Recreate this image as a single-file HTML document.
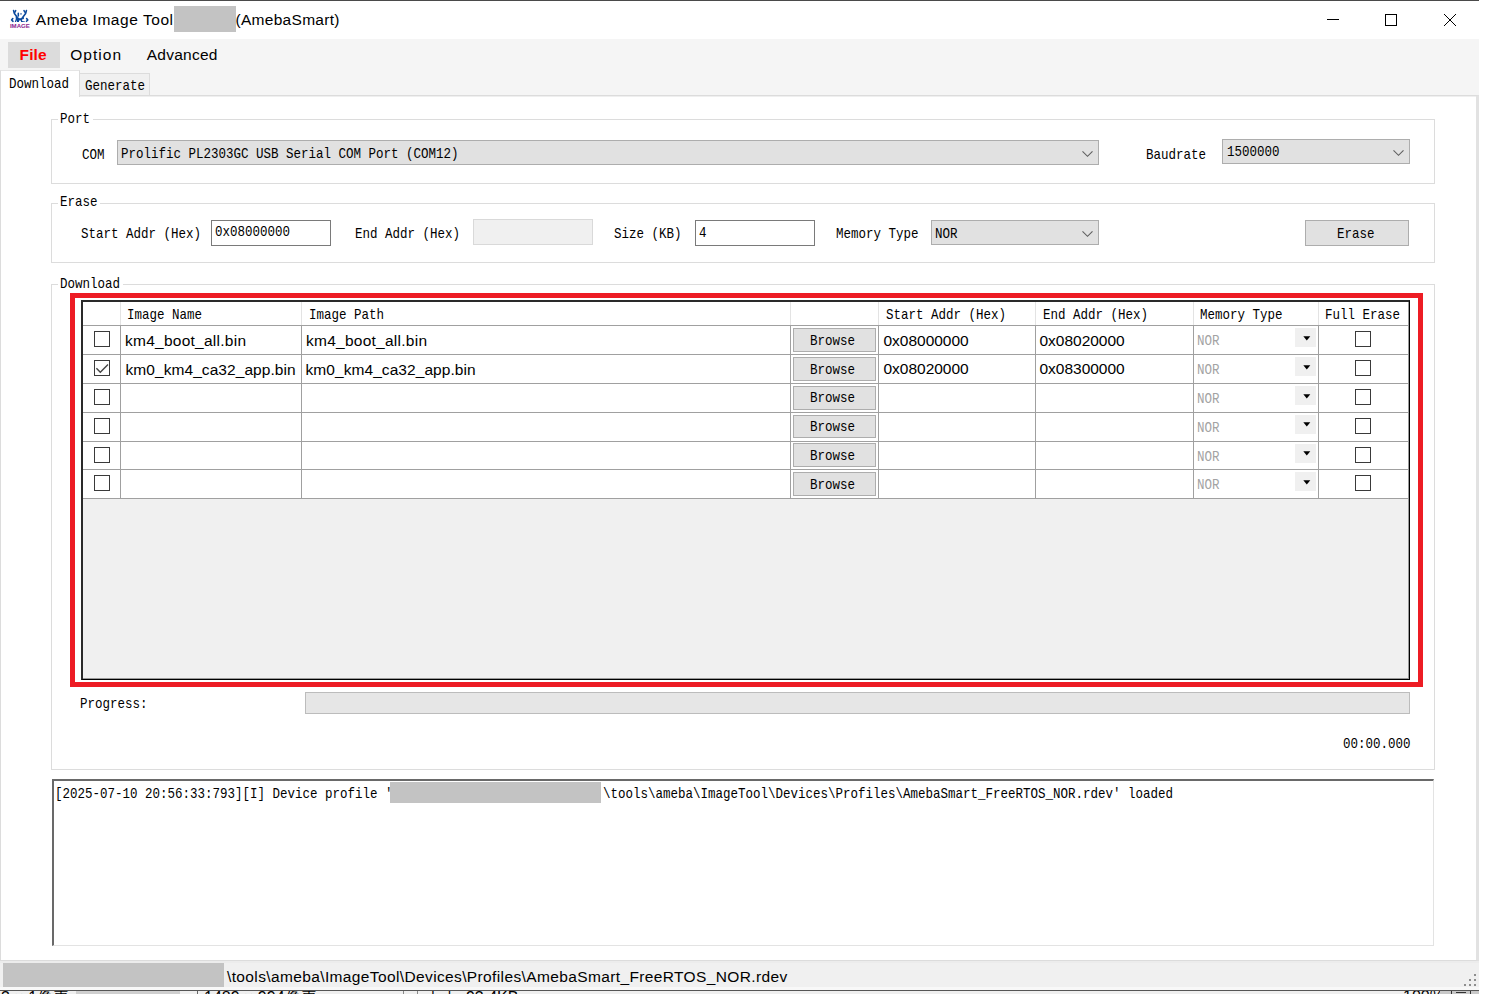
<!DOCTYPE html>
<html lang="en"><head><meta charset="utf-8"><title>Ameba Image Tool (AmebaSmart)</title>
<style>
*{box-sizing:border-box;margin:0;padding:0}
html,body{width:1489px;height:994px;overflow:hidden;background:#fff}
body{position:relative;font-family:"Liberation Sans",sans-serif;color:#000}
.a{position:absolute}
.m{position:absolute;font-family:"Liberation Mono",monospace;font-size:15px;line-height:16px;height:16px;white-space:pre;transform-origin:0 0;transform:scaleX(.8333);color:#000}
.s{position:absolute;font-family:"Liberation Sans",sans-serif;white-space:pre;color:#000}
.gb{position:absolute;border:1px solid #dcdcdc;background:#fff}
.gl{position:absolute;background:#fff;height:16px}
.sel{position:absolute;background:#e1e1e1;border:1px solid #adadad}
.inp{position:absolute;background:#fff;border:1px solid #7a7a7a}
.btn{position:absolute;background:#e1e1e1;border:1px solid #adadad}
.cb{position:absolute;width:16px;height:16px;border:1px solid #3a3a3a;background:#fff}
.hl{position:absolute;height:1px;background:#a0a0a0}
.vl{position:absolute;width:1px;background:#a0a0a0}
</style></head>
<body>
<div class="a" style="left:0px;top:0px;width:1479px;height:1px;background:#4a4a4a"></div>
<svg class="a" style="left:6px;top:6px" width="28" height="26" viewBox="0 0 28 26">
<g fill="none" stroke="#0b4a9e" stroke-width="1.6" stroke-linecap="round" stroke-linejoin="round">
<path d="M7.6 4.6L8.4 7.6L11.2 11.2"/><path d="M9.7 4.6L8.6 6.6"/>
<path d="M20.4 4.6L19.6 7.6L16.8 11.2"/><path d="M18 4.6L19.3 6.6"/>
<path d="M12.3 7.4V10"/>
<path d="M6.8 12.5L5.6 14L7 15.3"/><path d="M20.6 12.5L21.8 14L20.5 15.3"/>
</g>
<path d="M9.6 10.4L12.4 11.6L14 12.6L17.6 10.6L18 13L16 13.6L16.2 15L19 15.4V16H15V14.4L13 14.6V16H11V14L10 16H8.8L9.8 13Z" fill="#0b4a9e"/>
<circle cx="15" cy="7.9" r="0.8" fill="#3a6ab0"/>
<text x="3.9" y="21.9" font-family="Liberation Sans, sans-serif" font-weight="bold" font-size="5.6" fill="#8b1f8f" textLength="20" lengthAdjust="spacingAndGlyphs">IMAGE</text>
</svg>
<span class="s" style="left:35.8px;top:10px;font-size:15.5px;line-height:20px;letter-spacing:0.552px;">Ameba Image Tool</span>
<div class="a" style="left:174px;top:6px;width:62px;height:26px;background:#c3c3c3"></div>
<span class="s" style="left:235.5px;top:10px;font-size:15.5px;line-height:20px;letter-spacing:0.289px;">(AmebaSmart)</span>
<svg class="a" style="left:1320px;top:8px" width="150" height="24" viewBox="0 0 150 24" fill="none" stroke="#000" stroke-width="1"><path d="M7 11.5H19"/><rect x="65.5" y="6.5" width="11" height="11"/><path d="M124 6L136 18M136 6L124 18"/></svg>
<div class="a" style="left:0px;top:39px;width:1479px;height:951px;background:#f5f5f5"></div>
<div class="a" style="left:8px;top:42px;width:52px;height:25.5px;background:#dcdcdc"></div>
<span class="s" style="left:19.6px;top:45px;font-size:15.5px;line-height:20px;letter-spacing:0.069px;font-weight:bold;color:#f00">File</span>
<span class="s" style="left:70.3px;top:45px;font-size:15.5px;line-height:20px;letter-spacing:1.02px;">Option</span>
<span class="s" style="left:146.8px;top:45px;font-size:15.5px;line-height:20px;letter-spacing:0.231px;">Advanced</span>
<div class="a" style="left:0px;top:95px;width:1479px;height:866px;background:#fff;border:1px solid #dcdcdc;border-right:3px solid #e2e2e2;box-shadow:inset 0 1px 0 #efefef"></div>
<div class="a" style="left:79px;top:73px;width:71px;height:23px;background:#f0f0f0;border:1px solid #dcdcdc"></div>
<span class="m" style="left:84.6px;top:79px;">Generate</span>
<div class="a" style="left:0px;top:70px;width:80px;height:27px;background:#fff;border:1px solid #dcdcdc;border-top-color:#e5e5e5;border-bottom:none"></div>
<span class="m" style="left:8.5px;top:77px;">Download</span>
<div class="gb" style="left:51px;top:119px;width:1384px;height:65px;"></div>
<div class="gl" style="left:58px;top:111px;width:35px;height:px;"></div>
<span class="m" style="left:59.9px;top:112px;">Port</span>
<span class="m" style="left:82px;top:148px;">COM</span>
<div class="sel" style="left:117px;top:140px;width:982px;height:25px;"></div>
<span class="m" style="left:121.2px;top:147px;">Prolific PL2303GC USB Serial COM Port (COM12)</span>
<svg class="a" style="left:1081px;top:149px" width="14" height="10" viewBox="0 0 14 10"><path d="M1.5 2.3L6.5 7.3L11.5 2.3" fill="none" stroke="#606060" stroke-width="1.15"/></svg>
<span class="m" style="left:1146.1px;top:148px;">Baudrate</span>
<div class="sel" style="left:1222px;top:139px;width:188px;height:25px;"></div>
<span class="m" style="left:1226.7px;top:145px;">1500000</span>
<svg class="a" style="left:1392px;top:148px" width="14" height="10" viewBox="0 0 14 10"><path d="M1.5 2.3L6.5 7.3L11.5 2.3" fill="none" stroke="#606060" stroke-width="1.15"/></svg>
<div class="gb" style="left:51px;top:203px;width:1384px;height:60px;"></div>
<div class="gl" style="left:58px;top:195px;width:42px;height:px;"></div>
<span class="m" style="left:60.3px;top:195px;">Erase</span>
<span class="m" style="left:80.9px;top:227px;">Start Addr (Hex)</span>
<div class="inp" style="left:211px;top:220px;width:120px;height:26px;"></div>
<span class="m" style="left:214.8px;top:225px;">0x08000000</span>
<span class="m" style="left:354.9px;top:227px;">End Addr (Hex)</span>
<div class="a" style="left:473px;top:219px;width:120px;height:26px;background:#f0f0f0;border:1px solid #d9d9d9"></div>
<span class="m" style="left:614px;top:227px;">Size (KB)</span>
<div class="inp" style="left:695px;top:220px;width:120px;height:26px;"></div>
<span class="m" style="left:698.7px;top:226px;">4</span>
<span class="m" style="left:836px;top:227px;">Memory Type</span>
<div class="sel" style="left:931px;top:220px;width:168px;height:25px;"></div>
<span class="m" style="left:934.9px;top:227px;">NOR</span>
<svg class="a" style="left:1081px;top:229px" width="14" height="10" viewBox="0 0 14 10"><path d="M1.5 2.3L6.5 7.3L11.5 2.3" fill="none" stroke="#606060" stroke-width="1.15"/></svg>
<div class="btn" style="left:1305px;top:220px;width:104px;height:26px;"></div>
<span class="m" style="left:1336.5px;top:227px;">Erase</span>
<div class="gb" style="left:51px;top:284px;width:1384px;height:486px;"></div>
<div class="gl" style="left:58px;top:276px;width:65px;height:px;"></div>
<span class="m" style="left:60.2px;top:277px;">Download</span>
<div class="a" style="left:70px;top:293px;width:1353px;height:394px;border:5px solid #ed1c24;background:#fff"></div>
<div class="a" style="left:81px;top:300px;width:1329px;height:380px;background:#f0f0f0;border:2px solid #2a2a2a;border-right:1px solid #000;border-bottom:1px solid #000;box-shadow:inset -1px -1px 0 #9a9a9a"></div>
<div class="a" style="left:83px;top:302px;width:1325px;height:197px;background:#fff"></div>
<div class="a" style="left:120px;top:302px;width:1px;height:23px;background:#e3e3e3"></div>
<div class="a" style="left:301px;top:302px;width:1px;height:23px;background:#e3e3e3"></div>
<div class="a" style="left:790px;top:302px;width:1px;height:23px;background:#e3e3e3"></div>
<div class="a" style="left:878px;top:302px;width:1px;height:23px;background:#e3e3e3"></div>
<div class="a" style="left:1035px;top:302px;width:1px;height:23px;background:#e3e3e3"></div>
<div class="a" style="left:1193px;top:302px;width:1px;height:23px;background:#e3e3e3"></div>
<div class="a" style="left:1318px;top:302px;width:1px;height:23px;background:#e3e3e3"></div>
<div class="hl" style="left:83px;top:325px;width:1325px;height:1px;"></div>
<div class="hl" style="left:83px;top:354px;width:1325px;height:1px;"></div>
<div class="hl" style="left:83px;top:383px;width:1325px;height:1px;"></div>
<div class="hl" style="left:83px;top:412px;width:1325px;height:1px;"></div>
<div class="hl" style="left:83px;top:441px;width:1325px;height:1px;"></div>
<div class="hl" style="left:83px;top:469px;width:1325px;height:1px;"></div>
<div class="hl" style="left:83px;top:498px;width:1325px;height:1px;"></div>
<div class="vl" style="left:120px;top:325px;width:1px;height:174px;"></div>
<div class="vl" style="left:301px;top:325px;width:1px;height:174px;"></div>
<div class="vl" style="left:790px;top:325px;width:1px;height:174px;"></div>
<div class="vl" style="left:878px;top:325px;width:1px;height:174px;"></div>
<div class="vl" style="left:1035px;top:325px;width:1px;height:174px;"></div>
<div class="vl" style="left:1193px;top:325px;width:1px;height:174px;"></div>
<div class="vl" style="left:1318px;top:325px;width:1px;height:174px;"></div>
<span class="m" style="left:126.5px;top:308px;">Image Name</span>
<span class="m" style="left:308.8px;top:308px;">Image Path</span>
<span class="m" style="left:885.5px;top:308px;">Start Addr (Hex)</span>
<span class="m" style="left:1043px;top:308px;">End Addr (Hex)</span>
<span class="m" style="left:1199.5px;top:308px;">Memory Type</span>
<span class="m" style="left:1325px;top:308px;">Full Erase</span>
<div class="cb" style="left:94px;top:331px;width:16px;height:16px;"></div>
<span class="s" style="left:125px;top:331px;font-size:15.5px;line-height:20px;letter-spacing:0.255px;">km4_boot_all.bin</span>
<span class="s" style="left:306px;top:331px;font-size:15.5px;line-height:20px;letter-spacing:0.255px;">km4_boot_all.bin</span>
<span class="s" style="left:883.5px;top:331px;font-size:15.5px;line-height:20px;letter-spacing:-0.02px;">0x08000000</span>
<span class="s" style="left:1039.5px;top:331px;font-size:15.5px;line-height:20px;letter-spacing:-0.02px;">0x08020000</span>
<div class="btn" style="left:793px;top:328px;width:83px;height:24px;"></div>
<span class="m" style="left:810.2px;top:334px;">Browse</span>
<span class="m" style="left:1196.6px;top:334px;color:#a3a3a3">NOR</span>
<div class="a" style="left:1295px;top:328px;width:21px;height:19px;background:#f0f0f0"></div>
<svg class="a" style="left:1303px;top:336px" width="8" height="5" viewBox="0 0 8 5"><path d="M0.3 0.3H7.3L3.8 4.4Z" fill="#000"/></svg>
<div class="cb" style="left:1355px;top:331px;width:16px;height:16px;"></div>
<div class="cb" style="left:94px;top:360px;width:16px;height:16px;"><svg width="14" height="14" viewBox="0 0 14 14" style="display:block"><path d="M1.4 7.2L5.3 11.2L13 3.5" fill="none" stroke="#444" stroke-width="1.4"/></svg></div>
<span class="s" style="left:125.5px;top:360px;font-size:15.5px;line-height:20px;letter-spacing:0.067px;">km0_km4_ca32_app.bin</span>
<span class="s" style="left:305.5px;top:360px;font-size:15.5px;line-height:20px;letter-spacing:0.067px;">km0_km4_ca32_app.bin</span>
<span class="s" style="left:883.5px;top:359px;font-size:15.5px;line-height:20px;letter-spacing:-0.02px;">0x08020000</span>
<span class="s" style="left:1039.5px;top:359px;font-size:15.5px;line-height:20px;letter-spacing:-0.02px;">0x08300000</span>
<div class="btn" style="left:793px;top:357px;width:83px;height:24px;"></div>
<span class="m" style="left:810.2px;top:363px;">Browse</span>
<span class="m" style="left:1196.6px;top:363px;color:#a3a3a3">NOR</span>
<div class="a" style="left:1295px;top:357px;width:21px;height:19px;background:#f0f0f0"></div>
<svg class="a" style="left:1303px;top:365px" width="8" height="5" viewBox="0 0 8 5"><path d="M0.3 0.3H7.3L3.8 4.4Z" fill="#000"/></svg>
<div class="cb" style="left:1355px;top:360px;width:16px;height:16px;"></div>
<div class="cb" style="left:94px;top:389px;width:16px;height:16px;"></div>
<div class="btn" style="left:793px;top:386px;width:83px;height:24px;"></div>
<span class="m" style="left:810.2px;top:391px;">Browse</span>
<span class="m" style="left:1196.6px;top:392px;color:#a3a3a3">NOR</span>
<div class="a" style="left:1295px;top:386px;width:21px;height:19px;background:#f0f0f0"></div>
<svg class="a" style="left:1303px;top:394px" width="8" height="5" viewBox="0 0 8 5"><path d="M0.3 0.3H7.3L3.8 4.4Z" fill="#000"/></svg>
<div class="cb" style="left:1355px;top:389px;width:16px;height:16px;"></div>
<div class="cb" style="left:94px;top:418px;width:16px;height:16px;"></div>
<div class="btn" style="left:793px;top:415px;width:83px;height:23px;"></div>
<span class="m" style="left:810.2px;top:420px;">Browse</span>
<span class="m" style="left:1196.6px;top:421px;color:#a3a3a3">NOR</span>
<div class="a" style="left:1295px;top:415px;width:21px;height:19px;background:#f0f0f0"></div>
<svg class="a" style="left:1303px;top:422px" width="8" height="5" viewBox="0 0 8 5"><path d="M0.3 0.3H7.3L3.8 4.4Z" fill="#000"/></svg>
<div class="cb" style="left:1355px;top:418px;width:16px;height:16px;"></div>
<div class="cb" style="left:94px;top:447px;width:16px;height:16px;"></div>
<div class="btn" style="left:793px;top:443px;width:83px;height:24px;"></div>
<span class="m" style="left:810.2px;top:449px;">Browse</span>
<span class="m" style="left:1196.6px;top:450px;color:#a3a3a3">NOR</span>
<div class="a" style="left:1295px;top:444px;width:21px;height:19px;background:#f0f0f0"></div>
<svg class="a" style="left:1303px;top:451px" width="8" height="5" viewBox="0 0 8 5"><path d="M0.3 0.3H7.3L3.8 4.4Z" fill="#000"/></svg>
<div class="cb" style="left:1355px;top:447px;width:16px;height:16px;"></div>
<div class="cb" style="left:94px;top:475px;width:16px;height:16px;"></div>
<div class="btn" style="left:793px;top:472px;width:83px;height:24px;"></div>
<span class="m" style="left:810.2px;top:478px;">Browse</span>
<span class="m" style="left:1196.6px;top:478px;color:#a3a3a3">NOR</span>
<div class="a" style="left:1295px;top:472px;width:21px;height:19px;background:#f0f0f0"></div>
<svg class="a" style="left:1303px;top:480px" width="8" height="5" viewBox="0 0 8 5"><path d="M0.3 0.3H7.3L3.8 4.4Z" fill="#000"/></svg>
<div class="cb" style="left:1355px;top:475px;width:16px;height:16px;"></div>
<span class="m" style="left:79.8px;top:697px;">Progress:</span>
<div class="a" style="left:305px;top:692px;width:1105px;height:22px;background:#e6e6e6;border:1px solid #bcbcbc"></div>
<span class="m" style="left:1343.2px;top:737px;">00:00.000</span>
<div class="a" style="left:52px;top:779px;width:1382px;height:167px;background:#fff;border:1px solid #e3e3e3;border-left:2px solid #696969;border-top:2px solid #696969"></div>
<span class="m" style="left:54.6px;top:787px;">[2025-07-10 20:56:33:793][I] Device profile '</span>
<div class="a" style="left:390px;top:782px;width:211px;height:21px;background:#c3c3c3"></div>
<span class="m" style="left:602.5px;top:787px;">\tools\ameba\ImageTool\Devices\Profiles\AmebaSmart_FreeRTOS_NOR.rdev' loaded</span>
<div class="a" style="left:0px;top:961px;width:1479px;height:29px;background:#f0f0f0;border-top:2px solid #ececec;border-bottom:3px solid #f8f8f8"></div>
<div class="a" style="left:3px;top:963px;width:221px;height:24px;background:#c3c3c3"></div>
<span class="s" style="left:227px;top:967px;font-size:15.5px;line-height:20px;letter-spacing:0.373px;">\tools\ameba\ImageTool\Devices\Profiles\AmebaSmart_FreeRTOS_NOR.rdev</span>
<svg class="a" style="left:1463px;top:973px" width="15" height="15" viewBox="0 0 15 15" fill="#8e8e8e"><rect x="11" y="1" width="2" height="2"/><rect x="6" y="6" width="2" height="2"/><rect x="11" y="6" width="2" height="2"/><rect x="1" y="11" width="2" height="2"/><rect x="6" y="11" width="2" height="2"/><rect x="11" y="11" width="2" height="2"/></svg>
<div class="a" style="left:0px;top:990px;width:1479px;height:1px;background:#555"></div>
<div class="a" style="left:0px;top:991px;width:1479px;height:3px;background:#efefef;overflow:hidden;font-family:"Liberation Sans","Noto Sans CJK SC",sans-serif;font-size:16px;line-height:18px;color:#222;white-space:pre"><span class="a" style="left:1px;top:-3px">3 × 1像素</span><span class="a" style="left:76px;top:0;width:104px;height:3px;background:#cfcfcf"></span><span class="a" style="left:197px;top:0;width:1px;height:3px;background:#666"></span><span class="a" style="left:204px;top:-3px">1489 × 994像素</span><span class="a" style="left:403px;top:0;width:1px;height:3px;background:#888"></span><span class="a" style="left:417px;top:0;width:1px;height:3px;background:#888"></span><span class="a" style="left:425px;top:-3px">大小: 93.4KB</span><span class="a" style="left:1403px;top:-3px">100%</span><span class="a" style="left:1440px;top:0;width:39px;height:3px;background:#c8c8c8"></span><span class="a" style="left:1451px;top:0;width:1px;height:3px;background:#333"></span><span class="a" style="left:1456px;top:1px;width:10px;height:1px;background:#333"></span><span class="a" style="left:1470px;top:0;width:1px;height:3px;background:#333"></span></div>
</body></html>
